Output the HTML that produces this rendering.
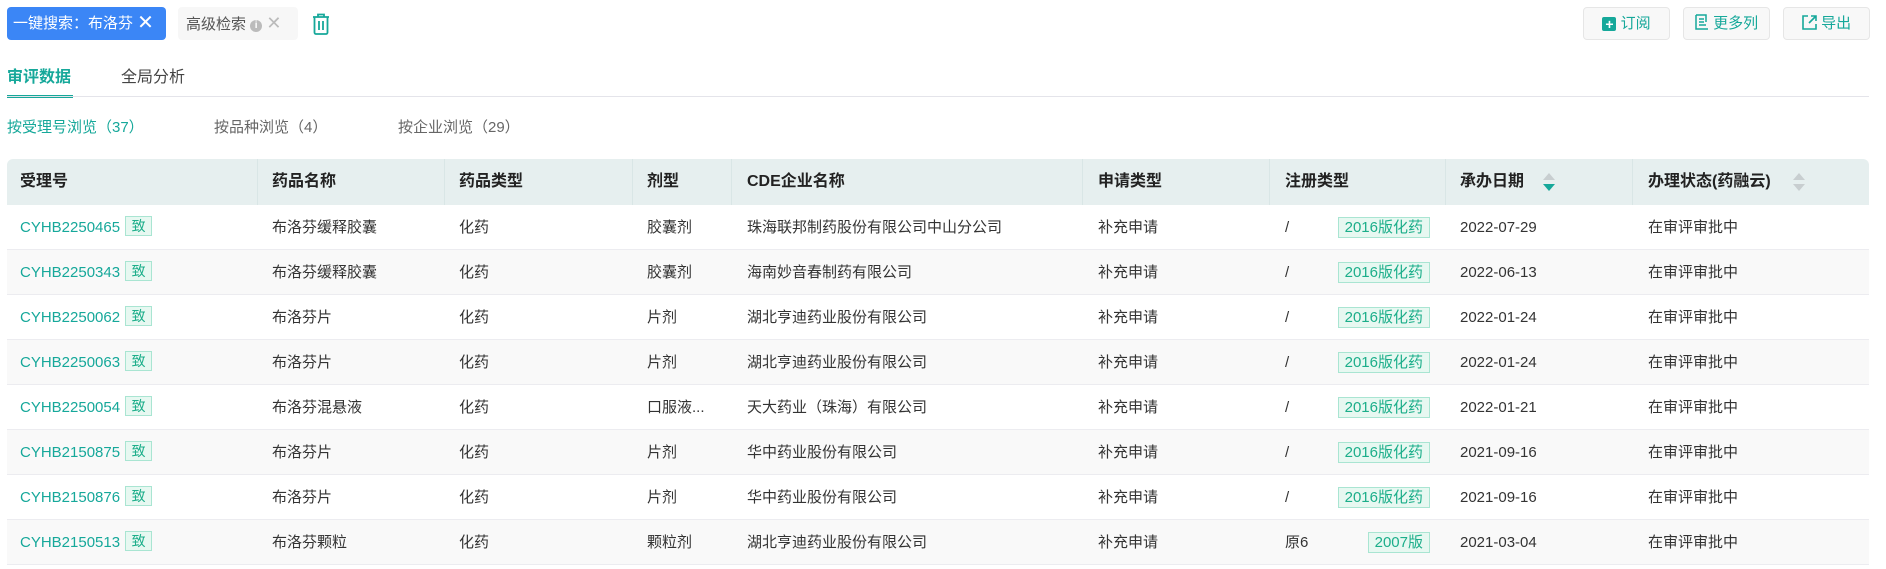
<!DOCTYPE html>
<html><head><meta charset="utf-8"><style>
*{margin:0;padding:0;box-sizing:border-box}
body{width:1886px;height:569px;overflow:hidden;background:#fff;font-family:"Liberation Sans","Noto Sans CJK SC",sans-serif;color:#333;position:relative}
.abs{position:absolute}
.tag1{left:7px;top:7px;width:159px;height:33px;background:#3b86f6;border-radius:4px;color:#fff;font-size:15px;line-height:33px;padding-left:6px}
.tag2{left:178px;top:7px;width:120px;height:33px;background:#f7f7f7;border-radius:4px;color:#555;font-size:15px;line-height:33px;padding-left:8px}
.btn{top:7px;height:33px;width:87px;background:#f8f8f8;border:1px solid #e6e6e6;border-radius:4px;color:#16a89a;font-size:15px;line-height:31px;text-align:center}
.tabs{left:7px;top:63px;font-size:16px}
.sub{top:116px;font-size:15px;color:#666}
.row{position:absolute;left:7px;width:1862px;height:45px;border-bottom:1px solid #ececf0}
.row.g{background:#f9f9f9}
.c{position:absolute;top:0;line-height:45px;font-size:15px;color:#333;white-space:nowrap}
.code{color:#16a89a}
.zhi{display:inline-block;width:27px;height:20px;line-height:18px;border:1px solid #a9e5d2;background:#e7f8f1;color:#1cae8a;text-align:center;font-size:14px;margin-left:5px;vertical-align:1px}
.rt{position:absolute;top:12px;height:21px;line-height:19px;border:1px solid #a9e5d2;background:#e7f8f1;color:#1cae8a;font-size:15px;padding:0 6px}
.hd{position:absolute;left:7px;top:159px;width:1862px;height:46px;background:#e6efef;border-radius:6px 6px 0 0}
.h{position:absolute;top:0;line-height:46px;font-size:16px;font-weight:bold;color:#222}
.vl{position:absolute;top:0;width:1px;height:46px;background:#d9e6e6}
</style></head><body>
<div class="abs tag1">一键搜索：布洛芬 <span style="font-size:20px;vertical-align:-1px">✕</span></div>
<div class="abs tag2">高级检索 <span style="display:inline-block;width:12px;height:12px;border-radius:6px;background:#bbb;color:#fff;font-size:10px;line-height:12px;text-align:center;font-weight:bold;vertical-align:1px">i</span> <span style="color:#bbb;font-size:18px">✕</span></div>
<svg class="abs" style="left:311px;top:13px" width="20" height="22" viewBox="0 0 20 22"><path d="M2 4h16M7 4V1.5h6V4M3.5 4v15.5a1.5 1.5 0 0 0 1.5 1.5h10a1.5 1.5 0 0 0 1.5-1.5V4M8 8v9M12 8v9" fill="none" stroke="#16a89a" stroke-width="1.8"/></svg>
<div class="abs btn" style="left:1583px"><span style="display:inline-block;width:14px;height:14px;background:#16a89a;border-radius:2px;color:#fff;font-size:14px;line-height:14px;font-weight:bold;vertical-align:-1px">+</span> 订阅</div>
<div class="abs btn" style="left:1683px"><svg width="14" height="16" viewBox="0 0 14 16" style="vertical-align:-2px"><path d="M1 1h10v7M1 1v14h12M4 5h5M4 8h5M4 11h7" fill="none" stroke="#16a89a" stroke-width="1.5"/></svg> 更多列</div>
<div class="abs btn" style="left:1783px"><svg width="15" height="15" viewBox="0 0 15 15" style="vertical-align:-2px"><path d="M6 1H1v13h13V9M9 1h5v5M14 1L7 8" fill="none" stroke="#16a89a" stroke-width="1.6"/></svg> 导出</div>
<div class="abs tabs"><span style="color:#16a89a;font-weight:bold">审评数据</span><span style="margin-left:50px;color:#444">全局分析</span></div>
<div class="abs" style="left:7px;top:95px;width:66px;height:3px;background:#16a89a"></div>
<div class="abs" style="left:7px;top:96px;width:1862px;height:1px;background:#e4e4ea"></div>
<div class="abs sub" style="left:7px;color:#16a89a">按受理号浏览（37）</div>
<div class="abs sub" style="left:214px">按品种浏览（4）</div>
<div class="abs sub" style="left:398px">按企业浏览（29）</div>
<div class="hd">
<div class="h" style="left:13px">受理号</div>
<div class="vl" style="left:250px"></div><div class="h" style="left:265px">药品名称</div>
<div class="vl" style="left:437px"></div><div class="h" style="left:452px">药品类型</div>
<div class="vl" style="left:625px"></div><div class="h" style="left:640px">剂型</div>
<div class="vl" style="left:724px"></div><div class="h" style="left:740px">CDE企业名称</div>
<div class="vl" style="left:1075px"></div><div class="h" style="left:1091px">申请类型</div>
<div class="vl" style="left:1262px"></div><div class="h" style="left:1278px">注册类型</div>
<div class="vl" style="left:1438px"></div><div class="h" style="left:1453px">承办日期</div>
<svg class="abs" style="left:1535px;top:13px" width="14" height="20"><path d="M7 1L13 8H1z" fill="#c8ced0"/><path d="M7 19L13 12H1z" fill="#16a89a"/></svg>
<div class="vl" style="left:1625px"></div><div class="h" style="left:1641px">办理状态(药融云)</div>
<svg class="abs" style="left:1785px;top:13px" width="14" height="20"><path d="M7 1L13 8H1z" fill="#c8ced0"/><path d="M7 19L13 12H1z" fill="#c8ced0"/></svg>
</div>
<div id="rows"></div>
<script>
var d=[["CYHB2250465","布洛芬缓释胶囊","胶囊剂","珠海联邦制药股份有限公司中山分公司","/","2016版化药","2022-07-29"],
["CYHB2250343","布洛芬缓释胶囊","胶囊剂","海南妙音春制药有限公司","/","2016版化药","2022-06-13"],
["CYHB2250062","布洛芬片","片剂","湖北亨迪药业股份有限公司","/","2016版化药","2022-01-24"],
["CYHB2250063","布洛芬片","片剂","湖北亨迪药业股份有限公司","/","2016版化药","2022-01-24"],
["CYHB2250054","布洛芬混悬液","口服液...","天大药业（珠海）有限公司","/","2016版化药","2022-01-21"],
["CYHB2150875","布洛芬片","片剂","华中药业股份有限公司","/","2016版化药","2021-09-16"],
["CYHB2150876","布洛芬片","片剂","华中药业股份有限公司","/","2016版化药","2021-09-16"],
["CYHB2150513","布洛芬颗粒","颗粒剂","湖北亨迪药业股份有限公司","原6","2007版","2021-03-04"]];
var h="";
d.forEach(function(r,i){
var top=205+i*45;
h+='<div class="row'+(i%2?' g':'')+'" style="top:'+top+'px">'+
'<div class="c code" style="left:13px">'+r[0]+'<span class="zhi">致</span></div>'+
'<div class="c" style="left:265px">'+r[1]+'</div>'+
'<div class="c" style="left:452px">化药</div>'+
'<div class="c" style="left:640px">'+r[2]+'</div>'+
'<div class="c" style="left:740px">'+r[3]+'</div>'+
'<div class="c" style="left:1091px">补充申请</div>'+
'<div class="c" style="left:1278px">'+r[4]+'</div>'+
'<div class="rt" style="right:'+(1862-1423)+'px">'+r[5]+'</div>'+
'<div class="c" style="left:1453px">'+r[6]+'</div>'+
'<div class="c" style="left:1641px">在审评审批中</div></div>';
});
document.getElementById("rows").innerHTML=h;
</script>
</body></html>
